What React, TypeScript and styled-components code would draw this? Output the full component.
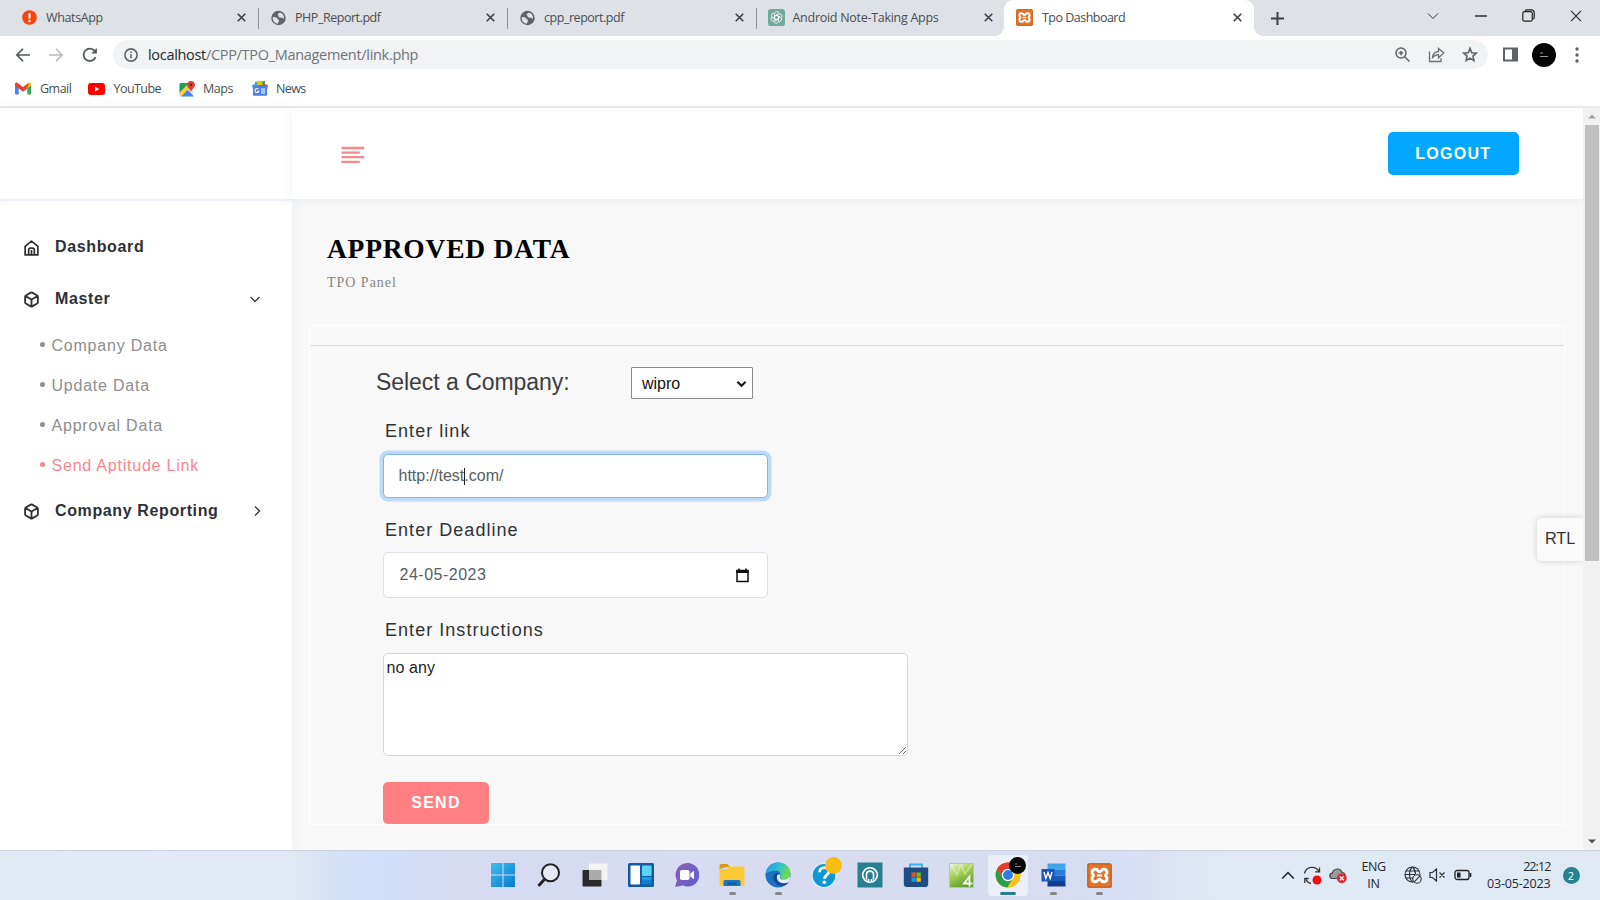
import React from 'react';
import styled, { createGlobalStyle } from 'styled-components';

const ui = "'Open Sans', 'Noto Sans', sans-serif";
const arial = "'Liberation Sans', Arial, sans-serif";
const times = "'Liberation Serif', 'Times New Roman', serif";

const GlobalStyle = createGlobalStyle`
  *, *::before, *::after { box-sizing: border-box; }
  body { margin: 0; overflow: hidden; background: #fff; }
  svg { display: block; flex: none; }
`;

const Screen = styled.div`
  width: 1600px;
  height: 900px;
  display: flex;
  flex-direction: column;
  overflow: hidden;
  font-family: ${ui};
`;

/* ---------- browser chrome ---------- */

const TabStrip = styled.div`
  height: 36px;
  padding-left: 10px;
  display: flex;
  background: #dee1e6;
`;

const Tab = styled.div<{ $active?: boolean; $w?: number; $divider?: boolean; $pl?: number; $pr?: number }>`
  position: relative;
  width: ${(p) => p.$w ?? 249}px;
  height: 36px;
  padding: 0 ${(p) => p.$pr ?? 13}px 1px ${(p) => p.$pl ?? 12}px;
  display: flex;
  align-items: center;
  gap: ${(p) => (p.$pl ? 8 : 9)}px;
  background: ${(p) => (p.$active ? '#fff' : 'transparent')};
  border-radius: 9px 9px 0 0;
  ${(p) =>
    p.$divider &&
    `&::after { content: ''; position: absolute; right: 0.5px; top: 8px; width: 1px; height: 21px; background: #8f9297; }`}
  ${(p) =>
    p.$active &&
    `&::before, &::after { content: ''; position: absolute; bottom: 0; width: 9px; height: 9px; }
     &::before { left: -9px; background: radial-gradient(circle at 0 0, transparent 8.5px, #fff 9px); }
     &::after { right: -9px; background: radial-gradient(circle at 100% 0, transparent 8.5px, #fff 9px); }`}
`;

const TabTitle = styled.span<{ $ls: number }>`
  flex: 1;
  white-space: nowrap;
  font-size: 12.5px;
  line-height: 18px;
  letter-spacing: ${(p) => p.$ls}px;
  color: #4a4d51;
`;

const NewTab = styled.div`
  width: 46px;
  display: grid;
  place-items: center;
`;

const WindowControls = styled.div`
  margin-left: auto;
  height: 31px;
  display: flex;
  align-items: center;
`;

const WindowButton = styled.div`
  width: 47.6px;
  display: grid;
  place-items: center;
`;

const Toolbar = styled.div`
  height: 37px;
  display: flex;
  align-items: center;
  background: #fff;
`;

const NavButtons = styled.div`
  width: 113px;
  padding-left: 15px;
  display: flex;
  align-items: center;
  gap: 17.3px;
`;

const Omnibox = styled.div`
  width: 1375px;
  height: 29px;
  padding: 0 10px;
  display: flex;
  align-items: center;
  background: #f1f3f4;
  border-radius: 15px;
`;

const Url = styled.span`
  flex: 1;
  margin-left: 9px;
  font-size: 14.5px;
  line-height: 20px;
  letter-spacing: -0.31px;
  color: #707478;
  b { font-weight: 400; color: #24272b; }
`;

const OmniActions = styled.div`
  display: flex;
  gap: 17px;
`;

const ToolbarEnd = styled.div`
  flex: 1;
  padding: 0 21px 0 14px;
  display: flex;
  align-items: center;
`;

const Avatar = styled.div`
  width: 24px;
  height: 24px;
  margin: 0 19px 0 13px;
  border-radius: 50%;
  background: #050505;
  display: grid;
  place-items: center;
`;

const Bookmarks = styled.div`
  height: 35px;
  padding: 0 15px 2px;
  display: flex;
  align-items: center;
  border-bottom: 2px solid #ebebec;
  background: #fff;
`;

const Bookmark = styled.div<{ $w: number; $gap: number; $ls: number }>`
  width: ${(p) => p.$w}px;
  display: flex;
  align-items: center;
  gap: ${(p) => p.$gap}px;
  font-size: 12.5px;
  line-height: 18px;
  letter-spacing: ${(p) => p.$ls}px;
  color: #4a4d51;
`;

/* ---------- web page ---------- */

const Page = styled.div`
  height: 742px;
  display: flex;
  font-family: ${arial};
  background: #f8f8f8;
`;

const Sidebar = styled.aside`
  width: 292px;
  background: #fff;
  box-shadow: 0 0 14px rgba(60, 80, 150, 0.06);
`;

const Brand = styled.div`
  height: 93px;
  border-bottom: 2px solid #eff2f9;
  box-shadow: 0 1px 4px rgba(60, 80, 150, 0.05);
`;

const Menu = styled.nav`
  padding-top: 20px;
`;

const MenuItem = styled.div`
  height: 52px;
  padding: 0 29px 0 23px;
  display: flex;
  align-items: center;
  color: #2f3033;
`;

const MenuLabel = styled.span<{ $ls?: number }>`
  flex: 1;
  margin-left: 15px;
  font-size: 16px;
  line-height: 20px;
  font-weight: 700;
  letter-spacing: ${(p) => p.$ls ?? 0.64}px;
`;

const SubMenu = styled.ul`
  margin: 0;
  padding: 0 0 0 40px;
  list-style: none;
`;

const SubItem = styled.li<{ $active?: boolean }>`
  height: 40px;
  padding-top: 2px;
  display: flex;
  align-items: center;
  gap: 6.5px;
  font-size: 16px;
  letter-spacing: 0.78px;
  color: ${(p) => (p.$active ? '#f9868b' : '#8e8e8e')};
  &::before {
    content: '';
    width: 5px;
    height: 5px;
    margin-bottom: 4px;
    border-radius: 50%;
    background: currentColor;
  }
`;

const Content = styled.main`
  width: 1291px;
`;

const Header = styled.header`
  height: 91px;
  padding: 0 64px 0 49px;
  display: flex;
  align-items: center;
  justify-content: space-between;
  background: #fff;
  box-shadow: 0 2px 10px rgba(60, 80, 150, 0.07);
`;

const MenuToggle = styled.div`
  padding-top: 3px;
`;

const Button = styled.button<{ $w: number; $h: number; $bg: string; $ls: number }>`
  display: block;
  width: ${(p) => p.$w}px;
  height: ${(p) => p.$h}px;
  padding: 0;
  border: 0;
  border-radius: 5px;
  background: ${(p) => p.$bg};
  color: #fff;
  font: 700 16px ${arial};
  letter-spacing: ${(p) => p.$ls}px;
`;

const Heading = styled.div`
  height: 126px;
  padding: 32px 0 0 35px;
  font-family: ${times};
`;

const Title = styled.h1`
  margin: 0;
  font-size: 27.5px;
  line-height: 36px;
  font-weight: 700;
  letter-spacing: 0.76px;
  color: #000;
`;

const Subtitle = styled.p`
  margin: 8px 0 0;
  font-size: 14px;
  line-height: 16px;
  letter-spacing: 0.98px;
  color: #858585;
`;

const Card = styled.section`
  width: 1256px;
  height: 500px;
  margin-left: 17px;
  border: 1px solid #fefefe;
`;

const Divider = styled.hr`
  margin: 19px 0 0;
  border: 0;
  height: 1px;
  background: #dadbdb;
`;

const Form = styled.div`
  padding: 21px 0 0 73px;
`;

const CompanyRow = styled.div`
  height: 32px;
  display: flex;
  align-items: center;
`;

const CompanyLabel = styled.label`
  width: 255px;
  margin-left: -7px;
  padding-bottom: 3px;
  font-size: 23px;
  line-height: 28px;
  letter-spacing: -0.04px;
  color: #3b3d3f;
`;

const SelectBox = styled.div`
  width: 122px;
  height: 32px;
  padding: 1px 5px 0 10px;
  display: flex;
  align-items: center;
  justify-content: space-between;
  border: 1px solid #8a8a8a;
  border-radius: 1px;
  background: #fff;
  font-size: 16px;
  color: #111;
`;

const FieldLabel = styled.label<{ $mt: number; $mb: number }>`
  display: block;
  margin: ${(p) => p.$mt}px 0 ${(p) => p.$mb}px 2px;
  font-size: 18px;
  line-height: 22px;
  letter-spacing: 1.04px;
  color: #303234;
`;

const Field = styled.div<{ $h: number; $focus?: boolean; $ls?: number }>`
  width: 385px;
  height: ${(p) => p.$h}px;
  padding: 0 18px 0 ${(p) => (p.$focus ? 14.5 : 15.5)}px;
  display: flex;
  align-items: center;
  border: 1px solid ${(p) => (p.$focus ? '#80b5f2' : '#dcdfe3')};
  border-radius: 5px;
  background: #fff;
  box-shadow: ${(p) => (p.$focus ? '0 0 0 3.5px #bfdaf9' : 'none')};
  font-size: 16px;
  letter-spacing: ${(p) => p.$ls ?? 0}px;
  color: #565d64;
`;

const Caret = styled.i`
  width: 1px;
  height: 17px;
  margin: 0 -0.5px;
  background: #222;
`;

const FieldEnd = styled.span`
  margin-left: auto;
`;

const Instructions = styled.textarea`
  display: block;
  width: 525px;
  height: 103px;
  padding: 4px 2.5px;
  border: 1px solid #d3d7dc;
  border-radius: 5px;
  outline: 0;
  background: #fff;
  font: 16px/20px ${arial};
  letter-spacing: 0.1px;
  color: #1d1d1d;
`;

const SendRow = styled.div`
  margin-top: 26px;
`;

const RtlToggle = styled.div`
  position: absolute;
  left: 1537px;
  top: 518px;
  width: 46px;
  height: 43px;
  padding: 0 0 2px 8px;
  display: flex;
  align-items: center;
  border-radius: 5px 0 0 5px;
  background: #fafafa;
  box-shadow: 0 0 6px rgba(0, 0, 0, 0.17);
  clip-path: inset(-8px 0 -8px -8px);
  font: 16.3px ${arial};
  letter-spacing: -0.1px;
  color: #333;
`;

const Scrollbar = styled.div`
  width: 17px;
  display: flex;
  flex-direction: column;
  align-items: center;
  background: #f1f1f1;
`;

const ScrollArrow = styled.div`
  flex: none;
  height: 17px;
  display: grid;
  place-items: center;
`;

const ScrollThumb = styled.div`
  flex: none;
  width: 14px;
  height: 436px;
  margin-bottom: auto;
  background: #c1c1c1;
`;

/* ---------- taskbar ---------- */

const Taskbar = styled.footer`
  height: 50px;
  display: flex;
  border-top: 1px solid #cbd2e2;
  background: linear-gradient(90deg, #deebf5 0, #e0eaf5 290px, #d2e0f6 345px, #cfdff8 395px, #d5daf1 440px, #d7dcf2 700px, #d8dcf0 1020px, #d5def4 1120px, #dde8f5 1200px, #e0eaf5 1300px, #dfe9f4 1600px);
`;

const Apps = styled.div`
  width: 780px;
  padding-left: 480px;
  box-sizing: content-box;
  display: flex;
`;

const TaskItem = styled.div<{ $active?: boolean }>`
  position: relative;
  width: 45.9px;
  height: 49px;
  padding-bottom: 1px;
  display: grid;
  place-items: center;
  z-index: 0;
  ${(p) =>
    p.$active &&
    `&::before { content: ''; position: absolute; z-index: -1; left: 3px; right: 3px; top: 4px; bottom: 4px; border-radius: 4px; background: #eceff9; }`}
`;

const RunMark = styled.i<{ $active?: boolean }>`
  position: absolute;
  bottom: 5px;
  left: calc(50% - ${(p) => (p.$active ? 8 : 3.5)}px);
  width: ${(p) => (p.$active ? 16 : 7)}px;
  height: 3px;
  border-radius: 2px;
  background: ${(p) => (p.$active ? '#2b7f90' : '#85868f')};
`;

const Badge = styled.i<{ $bg: string }>`
  position: absolute;
  left: 24px;
  top: 6px;
  width: 17px;
  height: 17px;
  border-radius: 50%;
  background: ${(p) => p.$bg};
`;

const BadgeMark = styled.svg`
  margin: 5px 0 0 5px;
`;

const Tray = styled.div`
  flex: 1;
  padding-left: 20px;
  display: flex;
  align-items: center;
  color: #26282c;
`;

const TrayIcon = styled.div<{ $w: number }>`
  width: ${(p) => p.$w}px;
  padding-bottom: 1px;
  display: grid;
  place-items: center;
`;

const TwoLines = styled.div<{ $w: number; $align: string }>`
  width: ${(p) => p.$w}px;
  text-align: ${(p) => p.$align};
  font-size: 12.5px;
  line-height: 16.5px;
  span { display: block; }
`;

const Line = styled.span<{ $ls: number }>`
  letter-spacing: ${(p) => p.$ls}px;
`;

const NoticeCount = styled.div`
  width: 17px;
  height: 17px;
  margin-left: 12px;
  margin-bottom: 1px;
  border-radius: 50%;
  background: #27828f;
  color: #fff;
  font-size: 11px;
  line-height: 17px;
  text-align: center;
`;

/* ---------- drawings ---------- */

const Cross = ({ size = 9, w = 1.8, color = '#3c4043' }) => (
  <svg width={size} height={size} viewBox="0 0 10 10" stroke={color} strokeWidth={w} fill="none">
    <path d="M.8.8l8.4 8.4M9.2.8L.8 9.2" />
  </svg>
);

const Globe = () => (
  <svg width="15" height="16" viewBox="0 0 16 16">
    <circle cx="8" cy="8" r="7.7" fill="#5f6368" />
    <path d="M2 7c1.800 .2 3.600 0 4.700 1.500.5 1.200 2 1 1.800 2.500C8.300 12.500 7.500 13 7.200 14.200 4 13.800 1.500 11.200 2 7zM9.500 2.200c-.3 1-2.200 .8-2.400 1.900-.3 1.200 1 1.200 1.100 2.300.1 1 1.400 1.500 2.500 1.200 1.200-.3 1.500 1.400 3.300.9C14 5.200 12.200 2.800 9.500 2.200z" fill="#dee1e6" />
  </svg>
);

const Xampp = ({ s = 16 }) => (
  <svg width={s} height={s} viewBox="0 0 24 24">
    <rect width="24" height="24" rx="2.500" fill="#e0752b" />
    <rect x="1" y="1" width="22" height="22" rx="2" fill="none" stroke="#c85f1c" strokeWidth="1" />
    <path d="M8 6c2.700 0 2.400 2.600 4 2.600S13.300 6 16 6c2.300 0 3.200 1.600 3.200 3.200 0 1.500-1.500 2-1.500 2.800s1.500 1.300 1.500 2.800c0 1.600-.9 3.200-3.200 3.200-2.700 0-2.400-2.600-4-2.600S10.700 18 8 18c-2.300 0-3.200-1.600-3.200-3.200 0-1.500 1.500-2 1.500-2.800s-1.500-1.300-1.500-2.800C4.800 7.600 5.700 6 8 6z" fill="none" stroke="#fff" strokeWidth="2.700" />
    <path d="M9.500 12h5" stroke="#fff" strokeWidth="2" />
  </svg>
);

const ChatGpt = () => (
  <svg width="17" height="17" viewBox="0 0 24 24">
    <rect width="24" height="24" rx="4" fill="#74aa9c" />
    <g fill="none" stroke="#fff" strokeWidth="1.200">
      {[0, 60, 120, 180, 240, 300].map((a) => (
        <path key={a} transform={`rotate(${a} 12 12)`} d="M9.200 13.600V7.500c0-4 5.300-4.600 6.500-1.400M9.200 10.300L14 7.500" />
      ))}
    </g>
  </svg>
);

const Cube = () => (
  <svg width="17" height="17" viewBox="0 0 24 24" fill="none" stroke="currentColor" strokeWidth="2.600" strokeLinejoin="round" strokeLinecap="round">
    <path d="M21 16V8a2 2 0 0 0-1-1.730l-7-4a2 2 0 0 0-2 0l-7 4A2 2 0 0 0 3 8v8a2 2 0 0 0 1 1.730l7 4a2 2 0 0 0 2 0l7-4A2 2 0 0 0 21 16zM3.300 7L12 12l8.700-5M12 22V12" />
  </svg>
);

const House = () => (
  <svg width="17" height="17" viewBox="0 0 24 24" fill="none" stroke="currentColor" strokeWidth="2.400" strokeLinejoin="round">
    <path d="M3 22.500V10.500L12 3l9 7.500v12zM8 22.500v-7q0-2.500 2.500-2.500h3q2.500 0 2.500 2.500v7M12 15.500v7" />
  </svg>
);

const Chevron = ({ d, w = 12, h = 12, sw = 1.4, color = '#3a3a3a' }: { d: string; w?: number; h?: number; sw?: number; color?: string }) => (
  <svg width={w} height={h} viewBox="0 0 12 12" fill="none" stroke={color} strokeWidth={sw}>
    <path d={d} />
  </svg>
);

const tabs = [
  { title: 'WhatsApp', ls: -0.36, icon: (
    <svg width="15" height="15" viewBox="0 0 15 15"><circle cx="7.500" cy="7.500" r="7.300" fill="#f8440b" /><path d="M7.500 3.200v5.300" stroke="#fff" strokeWidth="2.200" /><circle cx="7.500" cy="11" r="1.200" fill="#fff" /></svg>
  ) },
  { title: 'PHP_Report.pdf', ls: -0.46, icon: <Globe /> },
  { title: 'cpp_report.pdf', ls: -0.46, icon: <Globe /> },
  { title: 'Android Note-Taking Apps', ls: -0.28, icon: <ChatGpt /> },
];

export default function App() {
  return (
    <Screen>
      <GlobalStyle />
      <TabStrip>
        {tabs.map((t, i) => (
          <Tab key={t.title} $divider={i < 3} $w={i === 3 ? 247 : 249} $pl={i === 3 ? 10.5 : undefined} $pr={i === 3 ? 11 : undefined}>
            {t.icon}
            <TabTitle $ls={t.ls}>{t.title}</TabTitle>
            <Cross />
          </Tab>
        ))}
        <Tab $active $w={250} $pr={12}>
          <Xampp s={17} />
          <TabTitle $ls={-0.52}>Tpo Dashboard</TabTitle>
          <Cross />
        </Tab>
        <NewTab>
          <svg width="13" height="13" viewBox="0 0 13 13" stroke="#3c4043" strokeWidth="2"><path d="M6.500 0v13M0 6.500h13" /></svg>
        </NewTab>
        <WindowControls>
          <WindowButton><Chevron d="M1 3.500l5 5 5-5" sw={1} color="#333" /></WindowButton>
          <WindowButton><svg width="12" height="12"><path d="M0 6h12" stroke="#111" strokeWidth="1.300" /></svg></WindowButton>
          <WindowButton>
            <svg width="13" height="13" viewBox="0 0 13 13" fill="none" stroke="#222" strokeWidth="1.200"><rect x=".8" y="2.600" width="9.500" height="9.600" rx="1.800" /><path d="M3 1.800C3.400 1 4 .8 5 .8h4.200c2 0 3 1 3 3v4.400c0 1-.3 1.500-1 1.900" /></svg>
          </WindowButton>
          <WindowButton><Cross size={12} w={0.9} color="#222" /></WindowButton>
        </WindowControls>
      </TabStrip>

      <Toolbar>
        <NavButtons>
          <svg width="16" height="16" viewBox="0 0 16 16" fill="none" stroke="#55595e" strokeWidth="1.700"><path d="M15 8H2M8 1.800L1.800 8 8 14.200" /></svg>
          <svg width="16" height="16" viewBox="0 0 16 16" fill="none" stroke="#b9bbbe" strokeWidth="1.600"><path d="M1 8h13M8 1.800L14.200 8 8 14.200" /></svg>
          <svg width="16" height="16" viewBox="0 0 16 16" fill="none" stroke="#55595e" strokeWidth="1.800"><path d="M13.600 10.200A6.200 6.200 0 1 1 12.600 3.800L14 5.200" /><path d="M14.900 1v5.600H9.300z" fill="#55595e" stroke="none" /></svg>
        </NavButtons>
        <Omnibox>
          <svg width="16" height="16" viewBox="0 0 16 16" fill="none" stroke="#5f6368" strokeWidth="1.600"><circle cx="8" cy="8" r="6.100" /><path d="M8 7.300v4M8 4.500v1.600" /></svg>
          <Url><b>localhost</b>/CPP/TPO_Management/link.php</Url>
          <OmniActions>
            <svg width="17" height="17" viewBox="0 0 17 17" fill="none" stroke="#5f6368" strokeWidth="1.500"><circle cx="7" cy="7" r="5" /><path d="M10.800 10.800l4.700 4.700M7 4.700v4.600M4.700 7h4.600" /></svg>
            <svg width="17" height="17" viewBox="0 0 17 17" fill="none" stroke="#6b6f74" strokeWidth="1.300"><path d="M1.500 5.500v10h11.500v-3.200M4.500 11.500c.3-4 2.600-5.800 6-5.900V2.400l5.300 4.700-5.300 4.700V8.700c-2.800 0-4.500.9-6 2.800z" /></svg>
            <svg width="16" height="17" viewBox="0 0 17 17" fill="none" stroke="#5f6368" strokeWidth="1.700"><path d="M8.500 2l1.900 4.600 4.900.4-3.700 3.200 1.100 4.800-4.200-2.600L4.300 15l1.100-4.800L1.700 7l4.900-.4z" /></svg>
          </OmniActions>
        </Omnibox>
        <ToolbarEnd>
          <svg width="17" height="16" viewBox="0 0 17 16"><path d="M1 .5h15v14H1z" fill="#5f6368" /><path d="M3 2.500h7v10H3z" fill="#fff" /></svg>
          <Avatar>
            <svg width="10" height="10" viewBox="0 0 10 10"><path d="M1 3h3M1 6.500h8" stroke="#999" strokeWidth="1.200" /></svg>
          </Avatar>
          <svg width="4" height="16" viewBox="0 0 4 16" fill="#5f6368"><circle cx="2" cy="2" r="1.700" /><circle cx="2" cy="8" r="1.700" /><circle cx="2" cy="14" r="1.700" /></svg>
        </ToolbarEnd>
      </Toolbar>

      <Bookmarks>
        <Bookmark $w={73} $gap={9} $ls={-0.5}>
          <svg width="16" height="13" viewBox="0 0 16 13"><path d="M0 2v9.500Q0 12.500 1 12.500h2.700V6z" fill="#4285f4" /><path d="M16 2v9.500q0 1-1 1h-2.700V6z" fill="#34a853" /><path d="M12.300 1.700L14 .7c1-.6 2 .2 2 1.300v1.600L12.300 6.500z" fill="#fbbc04" /><path d="M0 2C0 .7 1.300 0 2.300.8L8 5l5.700-4.200-1.400 5.700L8 9.700 0 3.700z" fill="#ea4335" /></svg>
          Gmail
        </Bookmark>
        <Bookmark $w={91} $gap={8.5} $ls={-0.55}>
          <svg width="17" height="12" viewBox="0 0 17 12"><rect width="17" height="12" rx="3" fill="#f00" /><path d="M7 3.400v5.200L11.200 6z" fill="#fff" /></svg>
          YouTube
        </Bookmark>
        <Bookmark $w={73} $gap={8} $ls={-0.45}>
          <svg width="16" height="16" viewBox="0 0 16 16"><rect x=".5" y="2" width="14" height="13.500" rx="1.500" fill="#e3e6ea" /><path d="M2 2h8L.5 12V3.500Q.5 2 2 2z" fill="#1e9e5a" /><path d="M2 15.500l6.500-7 6.500 7z" fill="#4285f4" /><path d="M.5 12L9 3.500l2 3L2 15.500Q.5 15 .5 12z" fill="#fbcf3b" /><path d="M12 0c2.400 0 4 1.700 4 3.800 0 2.700-2.800 3.800-4 7.200-1.200-3.400-4-4.500-4-7.200C8 1.700 9.600 0 12 0z" fill="#dc4437" /><circle cx="12" cy="3.900" r="1.400" fill="#7b231e" /></svg>
          Maps
        </Bookmark>
        <Bookmark $w={80} $gap={8} $ls={-0.6}>
          <svg width="16" height="15" viewBox="0 0 16 15"><path d="M3 1l10-1v5H3z" fill="#34a853" /><path d="M5 0l5 0 .5 4H5z" fill="#fbbc04" /><path d="M0 4l5-1.500V9H1z" fill="#4fa3e0" /><path d="M16 4l-5-1.300V9h4z" fill="#ea4335" /><rect x="1" y="4.700" width="14" height="10" rx="1" fill="#4c7fe8" /><path d="M6.500 8.200a2 2 0 1 0 .3 2H5.200M9 8h4M9 10h4.500M9 12h4" fill="none" stroke="#fff" strokeWidth="1.100" /></svg>
          News
        </Bookmark>
      </Bookmarks>

      <Page>
        <Sidebar>
          <Brand />
          <Menu>
            <MenuItem><House /><MenuLabel>Dashboard</MenuLabel></MenuItem>
            <MenuItem><Cube /><MenuLabel>Master</MenuLabel><Chevron d="M1.500 4L6 8.500 10.500 4" w={16} h={12} /></MenuItem>
            <SubMenu>
              <SubItem>Company Data</SubItem>
              <SubItem>Update Data</SubItem>
              <SubItem>Approval Data</SubItem>
              <SubItem $active>Send Aptitude Link</SubItem>
            </SubMenu>
            <MenuItem><Cube /><MenuLabel $ls={0.62}>Company Reporting</MenuLabel><Chevron d="M4 1.500L8.500 6 4 10.500" /></MenuItem>
          </Menu>
        </Sidebar>
        <Content>
          <Header>
            <MenuToggle>
              <svg width="24" height="18" viewBox="0 0 24 18" stroke="#f5898c" strokeWidth="2.300"><path d="M.5 2h22.700M.5 6.600h18.300M.5 11.200h22.700M.5 15.800h18.300" /></svg>
            </MenuToggle>
            <Button $w={131.5} $h={43} $bg="#02a8ff" $ls={1.3}>LOGOUT</Button>
          </Header>
          <Heading>
            <Title>APPROVED DATA</Title>
            <Subtitle>TPO Panel</Subtitle>
          </Heading>
          <Card>
            <Divider />
            <Form>
              <CompanyRow>
                <CompanyLabel>Select a Company:</CompanyLabel>
                <SelectBox>
                  wipro
                  <Chevron d="M1.500 4L6 8.500 10.500 4" sw={2.2} color="#111" w={11} h={11} />
                </SelectBox>
              </CompanyRow>
              <FieldLabel $mt={21} $mb={12}>Enter link</FieldLabel>
              <Field $h={44} $focus>http://test<Caret />.com/</Field>
              <FieldLabel $mt={21} $mb={11}>Enter Deadline</FieldLabel>
              <Field $h={46} $ls={0.5}>
                24-05-2023
                <FieldEnd>
                  <svg width="13" height="15" viewBox="0 0 13 15"><path d="M1 2.500h11v11H1z" fill="none" stroke="#111" strokeWidth="1.500" /><path d="M.3 2h12.400v3H.3zM2.200.5h1.600V3H2.200zM9.200.5h1.600V3H9.200z" fill="#111" /></svg>
                </FieldEnd>
              </Field>
              <FieldLabel $mt={21} $mb={12}>Enter Instructions</FieldLabel>
              <Instructions defaultValue="no any" />
              <SendRow>
                <Button $w={106} $h={42} $bg="#ff7f83" $ls={1.25}>SEND</Button>
              </SendRow>
            </Form>
          </Card>
        </Content>
        <Scrollbar>
          <ScrollArrow><svg width="8" height="5"><path d="M0 4.500L4 .5l4 4z" fill="#a0a0a0" /></svg></ScrollArrow>
          <ScrollThumb />
          <ScrollArrow><svg width="8" height="5"><path d="M0 .5h8l-4 4z" fill="#505050" /></svg></ScrollArrow>
        </Scrollbar>
        <RtlToggle>RTL</RtlToggle>
      </Page>

      <Taskbar>
        <Apps>
          <TaskItem>
            <svg width="24" height="24" viewBox="0 0 24 24"><defs><linearGradient id="win" x1="0" y1="0" x2="1" y2="1" gradientUnits="objectBoundingBox"><stop offset="0" stopColor="#3cc0ee" /><stop offset="1" stopColor="#0a78cf" /></linearGradient></defs><path d="M0 0h11.500v11.500H0zM12.500 0H24v11.500H12.500zM0 12.500h11.500V24H0zM12.500 12.500H24V24H12.500z" fill="url(#win)" /></svg>
          </TaskItem>
          <TaskItem>
            <svg width="24" height="24" viewBox="0 0 24 24" fill="none" stroke="#222" strokeLinecap="round"><circle cx="13.500" cy="9.700" r="8.500" strokeWidth="2" fill="#e5e9f6" /><path d="M7.300 16.500L2.300 22" strokeWidth="3" /></svg>
          </TaskItem>
          <TaskItem>
            <svg width="26" height="24" viewBox="0 0 26 24"><rect x=".5" y="7" width="19" height="16.500" rx="1" fill="#2a2a2a" /><rect x="7" y=".5" width="18.500" height="16.500" rx="1" fill="#f4f4f5" /><path d="M7 7h12.500v10H7z" fill="#aaa" /></svg>
          </TaskItem>
          <TaskItem>
            <svg width="26" height="24" viewBox="0 0 26 24"><rect width="26" height="24" rx="1.500" fill="#135aa0" /><rect x="2.500" y="2.500" width="9.500" height="19" rx=".8" fill="#fff" /><rect x="14" y="2.500" width="9.500" height="10.500" rx=".8" fill="#5ed3fa" /><rect x="14" y="14" width="9.500" height="3" fill="#189ce8" /><rect x="14" y="17" width="9.500" height="4.500" fill="#0f7dd2" /></svg>
          </TaskItem>
          <TaskItem>
            <svg width="24" height="24" viewBox="0 0 24 24"><defs><linearGradient id="chat" x1="0" y1="0" x2="1" y2="1"><stop offset="0" stopColor="#8a62b4" /><stop offset="1" stopColor="#5f5cd0" /></linearGradient></defs><path d="M12.500 0a11.800 11.800 0 1 1-4.700 22.600L0 24l2-6.500A11.800 11.800 0 0 1 12.500 0z" fill="url(#chat)" /><rect x="5" y="7" width="9.500" height="10" rx="1.800" fill="#fff" /><path d="M15.300 10.500l3.700-2.800v8.600l-3.700-2.800z" fill="#fff" /></svg>
          </TaskItem>
          <TaskItem>
            <svg width="26" height="24" viewBox="0 0 26 24"><path d="M.5 3Q.5 1 2 1h6.500l2.500 3h-3L.5 6z" fill="#d89a12" /><path d="M.5 6h8l2.500-2.500h13q1.500 0 1.500 1.500v16.500q0 1.500-1.500 1.500h-22Q.5 23 .5 21.500z" fill="#fdc936" /><path d="M4.500 23v-4.500q0-1.500 1.500-1.500h14q1.500 0 1.500 1.500V23z" fill="#1975c4" /><path d="M8.500 20.500h9" stroke="#0c4f93" strokeWidth="1.600" /></svg>
            <RunMark />
          </TaskItem>
          <TaskItem>
            <svg width="26" height="26" viewBox="0 0 26 26"><defs><linearGradient id="ed" x1="0" y1="0" x2="1" y2="0.300"><stop offset="0" stopColor="#2196e0" /><stop offset=".55" stopColor="#2fc0cf" /><stop offset="1" stopColor="#6ddb50" /></linearGradient></defs><circle cx="13" cy="13" r="12.500" fill="#1b6fc4" /><path d="M.7 11.500C1.800 4.500 7.400.5 13.200.5 20 .5 25.500 5.300 25.500 11c0 4-3 6.500-6.400 6.500-3.300 0-4.600-1.400-3.900-2.900.9-2.100.4-5.300-3.500-5.800-5-.5-9.300 2-11 2.700z" fill="url(#ed)" /><path d="M9.500 12c-3 4.500.6 10.800 6.500 11.800 2.500.3 6-.6 7.800-4-4.500 2.600-10 1.700-11-2.400-.5-2.200.6-3.500 1-5-1.200-1.600-3.200-1.900-4.300-.4z" fill="#144a94" /><path d="M12.300 13c1-1 2.600-.5 3 .5-.7 1.500-.7 2.700.3 3.400 1.300.9 4.200 1 6.500-.2 1-.5 2.200-1.500 2.800-2.800.3 2.500-.5 4.700-1.600 6.300-4.300 2-9.700.9-11-2.700-.5-1.700-.5-3.200 0-4.500z" fill="#e9eff8" /></svg>
            <RunMark />
          </TaskItem>
          <TaskItem>
            <svg width="26" height="26" viewBox="0 0 26 26"><circle cx="13" cy="13.500" r="12" fill="#0f97d3" stroke="#e6f3fb" strokeWidth="1.200" /><path d="M8.500 10.200c0-6 9.300-5.700 9.300-.7 0 3.400-4.300 3.400-4.300 7.200" fill="none" stroke="#fff" strokeWidth="2.800" /><circle cx="13.300" cy="20.300" r="1.800" fill="#fff" /></svg>
            <Badge $bg="#fdbc12" />
          </TaskItem>
          <TaskItem>
            <svg width="26" height="26" viewBox="0 0 26 26"><path d="M.5.500h25v25H.5z" fill="#277f90" /><circle cx="13" cy="13" r="7.300" fill="none" stroke="#fff" strokeWidth="1.600" /><path d="M9.500 17.500v-5c0-4.500 7-4.500 7 0v5M11.500 20v-3M14.500 20v-3" fill="none" stroke="#fff" strokeWidth="1.600" /></svg>
          </TaskItem>
          <TaskItem>
            <svg width="26" height="25" viewBox="0 0 26 25"><path d="M7 5V1.500h12V5" fill="none" stroke="#35b1e9" strokeWidth="1.800" /><path d="M.8 4.500h24.400V21q0 3-3 3H3.800q-3 0-3-3z" fill="#1f4c85" /><path d="M8.500 9.500h4.300v4.300H8.500z" fill="#f25022" /><path d="M13.500 9.500h4.300v4.300h-4.300z" fill="#7fba00" /><path d="M8.500 14.500h4.300v4.300H8.500z" fill="#00a4ef" /><path d="M13.500 14.500h4.300v4.300h-4.300z" fill="#ffb900" /></svg>
          </TaskItem>
          <TaskItem>
            <svg width="25" height="25" viewBox="0 0 25 25"><defs><linearGradient id="m4" x1="0" y1="0" x2="0.500" y2="1"><stop offset="0" stopColor="#eef6dc" /><stop offset=".45" stopColor="#a9d35a" /><stop offset="1" stopColor="#5f9f2c" /></linearGradient></defs><rect x=".5" y=".5" width="24" height="24" fill="url(#m4)" stroke="#b9c4b0" /><path d="M3 2l5 10 4-11M12 1l4 10 7-10" fill="none" stroke="#f5fbe6" strokeWidth="1.500" opacity=".45" /><path d="M20.500 23.500V13.500L15 20.500h8.500" fill="none" stroke="#fff" strokeWidth="1.800" /></svg>
          </TaskItem>
          <TaskItem $active>
            <svg width="26" height="26" viewBox="0 0 26 26"><circle cx="13" cy="13" r="12.500" fill="#fbc116" /><path d="M13 13L2.200 6.800A12.500 12.500 0 0 1 23.800 6.800z" fill="#e33b2e" /><path d="M2.200 6.800A12.500 12.500 0 0 0 12.500 25.500l5.600-9.600L13 13 7.600 16z" fill="#2a9c4a" /><path d="M13 6.800h10.800A12.500 12.500 0 0 1 12.500 25.500l5.900-9.400z" fill="#fbc116" /><path d="M2.200 6.800A12.500 12.500 0 0 1 23.800 6.800H13L7.600 16z" fill="#e33b2e" /><circle cx="13" cy="13" r="6.200" fill="#fff" /><circle cx="13" cy="13" r="4.900" fill="#2f7de9" /></svg>
            <Badge $bg="#060606">
              <BadgeMark width="8" height="7" viewBox="0 0 8 7"><path d="M1 2h2M1 4.500h6" stroke="#888" strokeWidth="1" /></BadgeMark>
            </Badge>
            <RunMark $active />
          </TaskItem>
          <TaskItem>
            <svg width="26" height="24" viewBox="0 0 26 24"><path d="M6.500.5h18v6h-18z" fill="#41a5ee" /><path d="M6.500 6.500h18v6h-18z" fill="#2b7cd3" /><path d="M6.500 12.500h18v5.500h-18z" fill="#185abd" /><path d="M6.500 18h18v5.500h-18z" fill="#103f91" /><path d="M.5 6h13v12.500H.5z" fill="#1a56b4" /><path d="M3 9l1.800 6.500L7 9.500l2.200 6L11 9" fill="none" stroke="#fff" strokeWidth="1.400" /></svg>
            <RunMark />
          </TaskItem>
          <TaskItem><Xampp s={25} /><RunMark /></TaskItem>
        </Apps>
        <Tray>
          <TrayIcon $w={15}><Chevron d="M1 9l5-5 5 5" w={14} h={14} sw={1.3} color="#26282c" /></TrayIcon>
          <TrayIcon $w={34}>
            <svg width="19" height="19" viewBox="0 0 19 19"><path d="M1.500 7.500A7.800 7.800 0 0 1 16 5.500M16.500 1.500v4.300h-4.300M1.800 12v5M1.800 12.500h4M3 13.500a7 7 0 0 0 5 4" fill="none" stroke="#333" strokeWidth="1.300" /><circle cx="14" cy="14" r="4.500" fill="#f80d0d" /></svg>
          </TrayIcon>
          <TrayIcon $w={17}>
            <svg width="18" height="18" viewBox="0 0 18 18"><path d="M3.500 12.500C0 12.500 0 7.500 3.300 7.200 4.500 2 11.500 1.500 13 6.500c4 0 4 6 .5 6z" fill="#9b9b9b" stroke="#444" strokeWidth="1.200" /><circle cx="12.800" cy="12.300" r="4.900" fill="#dc2b35" /><path d="M10.900 10.400l3.800 3.800M14.700 10.400l-3.800 3.800" stroke="#fff" strokeWidth="1.300" /></svg>
          </TrayIcon>
          <TwoLines $w={55} $align="center"><Line $ls={-0.4}>ENG</Line><Line $ls={-0.2}>IN</Line></TwoLines>
          <TrayIcon $w={23}>
            <svg width="18" height="18" viewBox="0 0 18 18" fill="none" stroke="#2b2d31" strokeWidth="1.100"><circle cx="8.500" cy="8.500" r="7.500" /><path d="M1 8.500h10M2 5h13M2 12h7M8.500 1C4.500 4.500 4.500 12.500 8.500 16M8.500 1c2 1.800 3 4.300 3 7" /><circle cx="13" cy="13" r="4.200" fill="#e0eaf5" /><path d="M10.200 15.800l5.600-5.600" /></svg>
          </TrayIcon>
          <TrayIcon $w={27}>
            <svg width="17" height="14" viewBox="0 0 17 14" fill="none" stroke="#2b2d31" strokeWidth="1.200"><path d="M1 4.500h2.500L7.500 1v12L3.500 9.500H1zM10.500 4.500l5 5M15.500 4.500l-5 5" /></svg>
          </TrayIcon>
          <TrayIcon $w={23}>
            <svg width="18" height="12" viewBox="0 0 18 12"><rect x="1" y="1.500" width="14" height="9" rx="2" fill="none" stroke="#222" strokeWidth="1.300" /><rect x="3" y="3.500" width="3.500" height="5" fill="#222" /><path d="M16.500 4v4" stroke="#222" strokeWidth="1.600" /></svg>
          </TrayIcon>
          <TwoLines $w={76.5} $align="right"><Line $ls={-0.9}>22:12</Line><Line $ls={-0.17}>03-05-2023</Line></TwoLines>
          <NoticeCount>2</NoticeCount>
        </Tray>
      </Taskbar>
    </Screen>
  );
}
